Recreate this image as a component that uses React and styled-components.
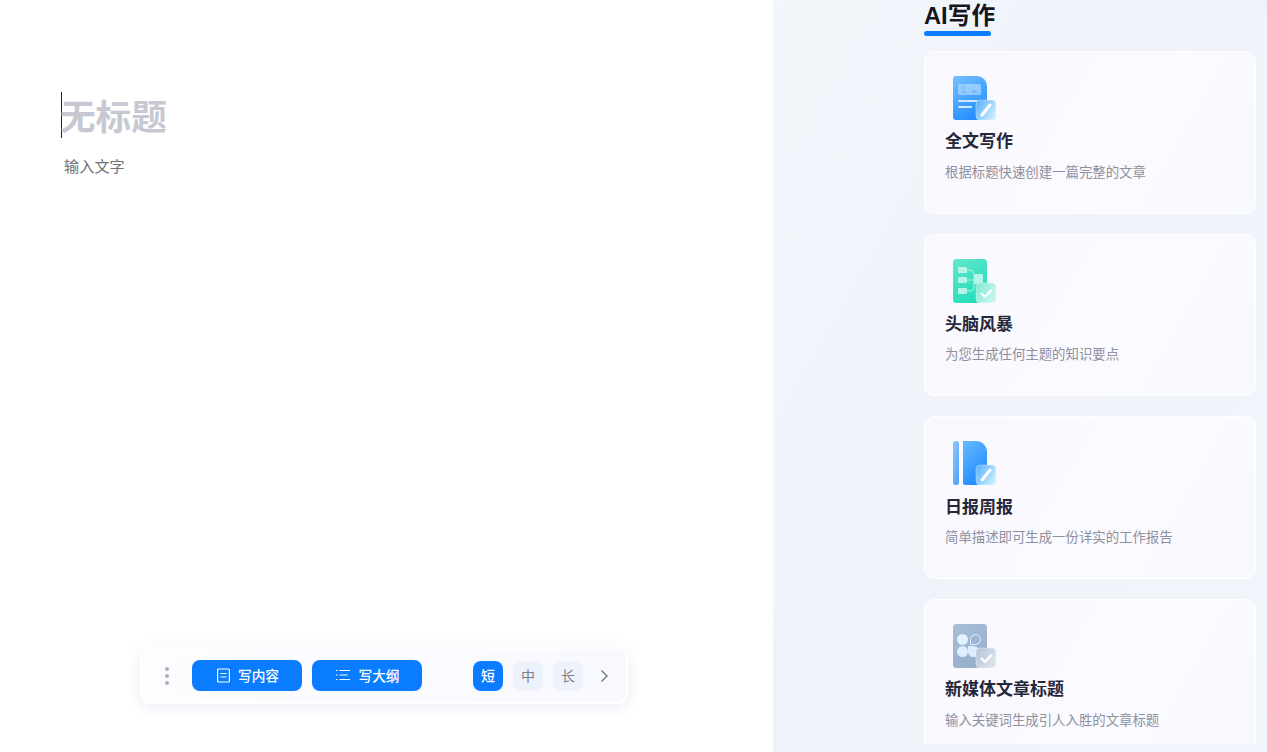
import React from 'react';
import styled, { createGlobalStyle } from 'styled-components';

const GlobalStyle = createGlobalStyle`
  html, body {
    margin: 0;
    padding: 0;
    height: 100%;
    background: #fff;
    font-family: "Noto Sans CJK SC", "Inter", "Liberation Sans", sans-serif;
  }
`;

const Page = styled.div`
  display: flex;
  width: 1267px;
  height: 752px;
  overflow: hidden;
`;

const Editor = styled.main`
  width: 773px;
  flex-shrink: 0;
  display: flex;
  flex-direction: column;
  padding: 92px 0 48px 61px;
  box-sizing: border-box;
  background: #fff;
`;

const TitleLine = styled.div`
  height: 46px;
  border-left: 1px solid #222;
  display: flex;
  align-items: center;
`;

const TitleText = styled.span`
  margin-left: -2px;
  font-size: 35.6px;
  line-height: 46px;
  font-weight: 700;
  color: #c6c9d1;
`;

const Placeholder = styled.div`
  margin: 15px 0 0 3px;
  font-size: 15.2px;
  line-height: 24px;
  color: #6f7278;
`;

const Toolbar = styled.div`
  margin: auto 0 0 79px;
  width: 488px;
  height: 57px;
  box-sizing: border-box;
  display: flex;
  align-items: center;
  padding: 0 10px 0 23px;
  border: 2px solid #fff;
  border-radius: 10px;
  background: linear-gradient(90deg, #fdfdff 0%, #f8f8ff 100%);
  box-shadow: 0 3px 14px rgba(90, 110, 160, 0.13);
`;

const Dots = styled.div`
  display: flex;
  flex-direction: column;
  gap: 3px;
  width: 4px;
  margin-right: 23px;
  span {
    width: 4px;
    height: 4px;
    border-radius: 50%;
    background: #aeb1bb;
  }
`;

const WriteButton = styled.button`
  flex-shrink: 0;
  width: 110px;
  height: 31px;
  margin-right: 10px;
  padding: 0 0 1px 2px;
  box-sizing: border-box;
  border: 0;
  border-radius: 8px;
  background: #0a7cff;
  color: #fff;
  font: 500 13.7px/30px "Noto Sans CJK SC", sans-serif;
  display: flex;
  align-items: center;
  justify-content: center;
  gap: 8px;
`;

const LengthGroup = styled.div`
  display: flex;
  align-items: center;
  gap: 10px;
  margin-left: 41px;
`;

const LengthButton = styled.button`
  flex-shrink: 0;
  width: 30px;
  height: 30px;
  padding: 0 0 1px;
  box-sizing: border-box;
  border: 0;
  border-radius: 8px;
  background: ${(p) => (p.$active ? '#0a7cff' : '#eef2fb')};
  color: ${(p) => (p.$active ? '#fff' : '#7b8089')};
  font: ${(p) => (p.$active ? 500 : 400)} 14px/29px "Noto Sans CJK SC", sans-serif;
`;

const Chevron = styled.svg`
  margin-left: 17px;
  flex-shrink: 0;
`;

const Side = styled.aside`
  flex: 1;
  padding: 0 11px 8px 151px;
  display: flex;
  flex-direction: column;
  background: linear-gradient(120deg, #f3f6fb 0%, #eff2f9 45%, #f1f5fc 100%);
`;

const SideTitle = styled.h2`
  margin: 0;
  width: max-content;
  height: 36px;
  font-family: "Liberation Sans", "Noto Sans CJK SC", sans-serif;
  font-size: 23.7px;
  line-height: 32px;
  font-weight: 700;
  color: #15161c;
  position: relative;
  &::after {
    content: '';
    position: absolute;
    left: 0;
    right: 4px;
    bottom: 0;
    height: 5px;
    border-radius: 3px;
    background: #0a7cff;
  }
`;

const CardList = styled.div`
  margin-top: 15px;
  flex: 1;
  min-height: 0;
  overflow: hidden;
  display: flex;
  flex-direction: column;
  gap: 20px;
`;

const Card = styled.section`
  flex-shrink: 0;
  height: 162.67px;
  box-sizing: border-box;
  padding: 24px 20px 0;
  border: 1.5px solid #fff;
  border-radius: 10px;
  background: linear-gradient(120deg, #f8f8fe 0%, #fafaff 60%, #f8f9ff 100%);
`;

const IconWrap = styled.div`
  height: 46px;
  padding-left: 8px;
  svg { display: block; }
`;

const CardTitle = styled.h3`
  margin: 6.3px 0 0;
  font-size: 17px;
  line-height: 24px;
  font-weight: 700;
  color: #25263a;
`;

const CardDesc = styled.p`
  margin: 7.3px 0 0;
  font-size: 13.4px;
  line-height: 22px;
  color: #8f909f;
`;

// doc body + glass badge, only the gradient and the inner drawing differ
function CardIcon({ id, from, to, badgeFrom, badgeTo, shape, check, children }) {
  const fill = `url(#${id}-body)`;
  return (
    <svg width="46" height="46" viewBox="0 0 46 46">
      <defs>
        <linearGradient id={`${id}-body`} x1="0.2" y1="0" x2="0.7" y2="1">
          <stop offset="0" stopColor={from} />
          <stop offset="1" stopColor={to} />
        </linearGradient>
        <linearGradient id={`${id}-badge`} x1="0" y1="0" x2="1" y2="0.6">
          <stop offset="0" stopColor={badgeFrom} />
          <stop offset="1" stopColor={badgeTo} />
        </linearGradient>
      </defs>
      {shape === 'book' && (
        <>
          <rect x="0" y="0" width="6" height="44" rx="2.5" fill={fill} opacity="0.75" />
          <path d="M10 0h13a11 11 0 0 1 11 11v33H12a2 2 0 0 1-2-2z" fill={fill} />
        </>
      )}
      {shape === 'doc' && (
        <path d="M3 0h21a10 10 0 0 1 10 10v31a3 3 0 0 1-3 3H3a3 3 0 0 1-3-3V3a3 3 0 0 1 3-3z" fill={fill} />
      )}
      {shape === 'plain' && <rect x="0" y="0" width="34" height="44" rx="3.5" fill={fill} />}
      {children}
      <rect x="23" y="24" width="20" height="20" rx="4" fill={`url(#${id}-badge)`} stroke="#fff" strokeOpacity="0.35" />
      {check ? (
        <path d="M28.5 34.5l3.5 3.5 6.5-7" fill="none" stroke="#fff" strokeWidth="1.9" strokeLinecap="round" strokeLinejoin="round" />
      ) : (
        <path d="M29 39l8-10" fill="none" stroke="#fff" strokeWidth="3" strokeLinecap="round" />
      )}
    </svg>
  );
}

const DocIcon = () => (
  <CardIcon id="doc" shape="doc" from="#70bcff" to="#1e8bff" badgeFrom="#58adff" badgeTo="#c4ecff">
    <rect x="5" y="8" width="23" height="11" rx="2" fill="#a9d7ff" opacity="0.75" />
    <circle cx="10" cy="12" r="1.5" fill="#70bcff" />
    <path d="M8 17l3-2.500 3 2.500zM18 17l3-4 3.500 4z" fill="#70bcff" />
    <rect x="5" y="24" width="20" height="2" rx="1" fill="#cfe8ff" />
    <rect x="5" y="30" width="14" height="2" rx="1" fill="#cfe8ff" />
  </CardIcon>
);

const MindIcon = () => (
  <CardIcon id="mind" shape="plain" from="#5de6cb" to="#22dcb8" badgeFrom="#7ae9d3" badgeTo="#c9f6ec" check>
    <path d="M14 11h3q4 0 4 4v5M14 21h8M14 32h3q4 0 4-4v-7" fill="none" stroke="#a8f2e2" strokeWidth="1" />
    <rect x="5" y="8" width="9" height="6" rx="1" fill="#b5f5e7" />
    <rect x="5" y="18" width="9" height="6" rx="1" fill="#b5f5e7" />
    <rect x="5" y="29" width="9" height="6" rx="1" fill="#b5f5e7" />
    <rect x="21" y="15" width="9" height="10" rx="1" fill="#b5f5e7" />
  </CardIcon>
);

const BookIcon = () => (
  <CardIcon id="book" shape="book" from="#62b6ff" to="#1c87ff" badgeFrom="#58adff" badgeTo="#c4ecff" />
);

const MediaIcon = () => (
  <CardIcon id="media" shape="plain" from="#a6bdd6" to="#95aecb" badgeFrom="#b3c3d6" badgeTo="#dbe3ec" check>
    <circle cx="9.500" cy="15.500" r="5.500" fill="#e4f1ff" />
    <path d="M17.500 20.500v-5a5 5 0 1 1 5 5z" fill="none" stroke="#e4f1ff" strokeWidth="1" />
    <circle cx="9.500" cy="27.500" r="5.500" fill="#dceeff" />
    <path d="M15 22h5.500a5.500 5.500 0 1 1-5.500 5.500z" fill="#dceeff" />
  </CardIcon>
);

const cards = [
  { title: '全文写作', desc: '根据标题快速创建一篇完整的文章', Icon: DocIcon },
  { title: '头脑风暴', desc: '为您生成任何主题的知识要点', Icon: MindIcon },
  { title: '日报周报', desc: '简单描述即可生成一份详实的工作报告', Icon: BookIcon },
  { title: '新媒体文章标题', desc: '输入关键词生成引人入胜的文章标题', Icon: MediaIcon },
];

export default function App() {
  return (
    <>
      <GlobalStyle />
      <Page>
        <Editor>
          <TitleLine>
            <TitleText>无标题</TitleText>
          </TitleLine>
          <Placeholder>输入文字</Placeholder>
          <Toolbar>
            <Dots>
              <span />
              <span />
              <span />
            </Dots>
            <WriteButton>
              <svg width="13" height="15" viewBox="0 0 13 15" fill="none" stroke="#fff" strokeWidth="1.2">
                <rect x="0.600" y="1" width="11.800" height="13" rx="1" />
                <path d="M3.500 5.500h6M3.500 9h6" />
              </svg>
              写内容
            </WriteButton>
            <WriteButton>
              <svg width="14" height="12" viewBox="0 0 14 12" fill="none" stroke="#fff" strokeWidth="1.2">
                <path d="M0 1.500h1.500M3.500 1.500h10.500M0 6h1.500M3.500 6h8M0 10.500h1.500M3.500 10.500h10.500" />
              </svg>
              写大纲
            </WriteButton>
            <LengthGroup>
              <LengthButton $active>短</LengthButton>
              <LengthButton>中</LengthButton>
              <LengthButton>长</LengthButton>
            </LengthGroup>
            <Chevron width="9" height="14" viewBox="0 0 9 14" fill="none" stroke="#7b8089" strokeWidth="1.5">
              <path d="M1.500 1.500L7 7l-5.500 5.500" />
            </Chevron>
          </Toolbar>
        </Editor>
        <Side>
          <SideTitle>AI写作</SideTitle>
          <CardList>
            {cards.map(({ title, desc, Icon }) => (
              <Card key={title}>
                <IconWrap>
                  <Icon />
                </IconWrap>
                <CardTitle>{title}</CardTitle>
                <CardDesc>{desc}</CardDesc>
              </Card>
            ))}
          </CardList>
        </Side>
      </Page>
    </>
  );
}
